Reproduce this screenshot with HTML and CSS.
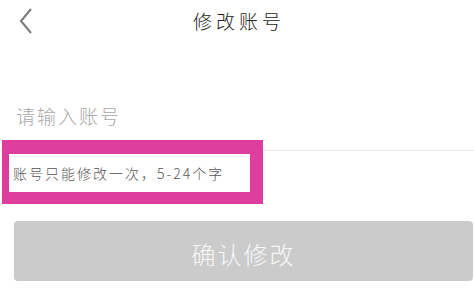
FILE: index.html
```html
<!DOCTYPE html>
<html lang="zh-CN">
<head>
<meta charset="utf-8">
<title>修改账号</title>
<link rel="stylesheet" href="styles.css">
</head>
<body>
<div class="page">
  <header class="nav">
    <div class="nav-left">
      <svg class="back" width="14" height="26" viewBox="0 0 14 26">
        <polyline points="12,1 2,13 12,25" fill="none" stroke="#7a7a7a" stroke-width="2" stroke-linejoin="miter"/>
      </svg>
    </div>
    <div class="nav-title">修改账号</div>
    <div class="nav-right"></div>
  </header>
  <div class="field">
    <span class="placeholder">请输入账号</span>
  </div>
  <div class="hint-box">
    <div class="hint-inner">账号只能修改一次，5-24个字</div>
  </div>
  <div class="btn">确认修改</div>
</div>
</body>
</html>
```
FILE: styles.css
```css
html, body {
  margin: 0;
  padding: 0;
  background: #ffffff;
}
body {
  font-family: "Noto Sans CJK SC", "Noto Sans", sans-serif;
  width: 474px;
  height: 291px;
  overflow: hidden;
}
.page {
  display: flex;
  flex-direction: column;
}
.nav {
  display: grid;
  grid-template-columns: 80px 1fr 80px;
  align-items: center;
  height: 41px;
}
.nav-left {
  display: flex;
  align-items: center;
  padding-left: 19px;
  padding-top: 1px;
}
.back {
  display: block;
}
.nav-title {
  text-align: center;
  font-size: 19px;
  letter-spacing: 4px;
  padding-left: 4px;
  color: #222;
  font-weight: 300;
  line-height: 22px;
}
.field {
  margin-top: 55px;
  height: 55px;
  box-sizing: border-box;
  border-bottom: 1px solid #e6e6e6;
  padding-left: 16px;
  padding-top: 7px;
}
.placeholder {
  font-size: 19px;
  letter-spacing: 2px;
  color: #a8a8a8;
  line-height: 26px;
  font-weight: 300;
}
.hint-box {
  margin-top: -11px;
  margin-left: 2px;
  width: 261px;
  box-sizing: border-box;
  background: #dd3e9d;
  padding: 14px 13px 12px 7px;
}
.hint-inner {
  background: #ffffff;
  height: 38px;
  display: flex;
  align-items: center;
  padding-left: 4px;
  font-size: 14px;
  letter-spacing: 2px;
  color: #555;
  font-weight: 300;
}
.btn {
  margin-top: 17px;
  margin-left: 14px;
  width: 459px;
  height: 60px;
  border-radius: 4px;
  background: #cbcbcb;
  color: #f7f7f7;
  display: flex;
  align-items: center;
  justify-content: center;
  font-size: 24px;
  letter-spacing: 2px;
  padding-top: 4px;
  box-sizing: border-box;
  font-weight: 300;
}
```
